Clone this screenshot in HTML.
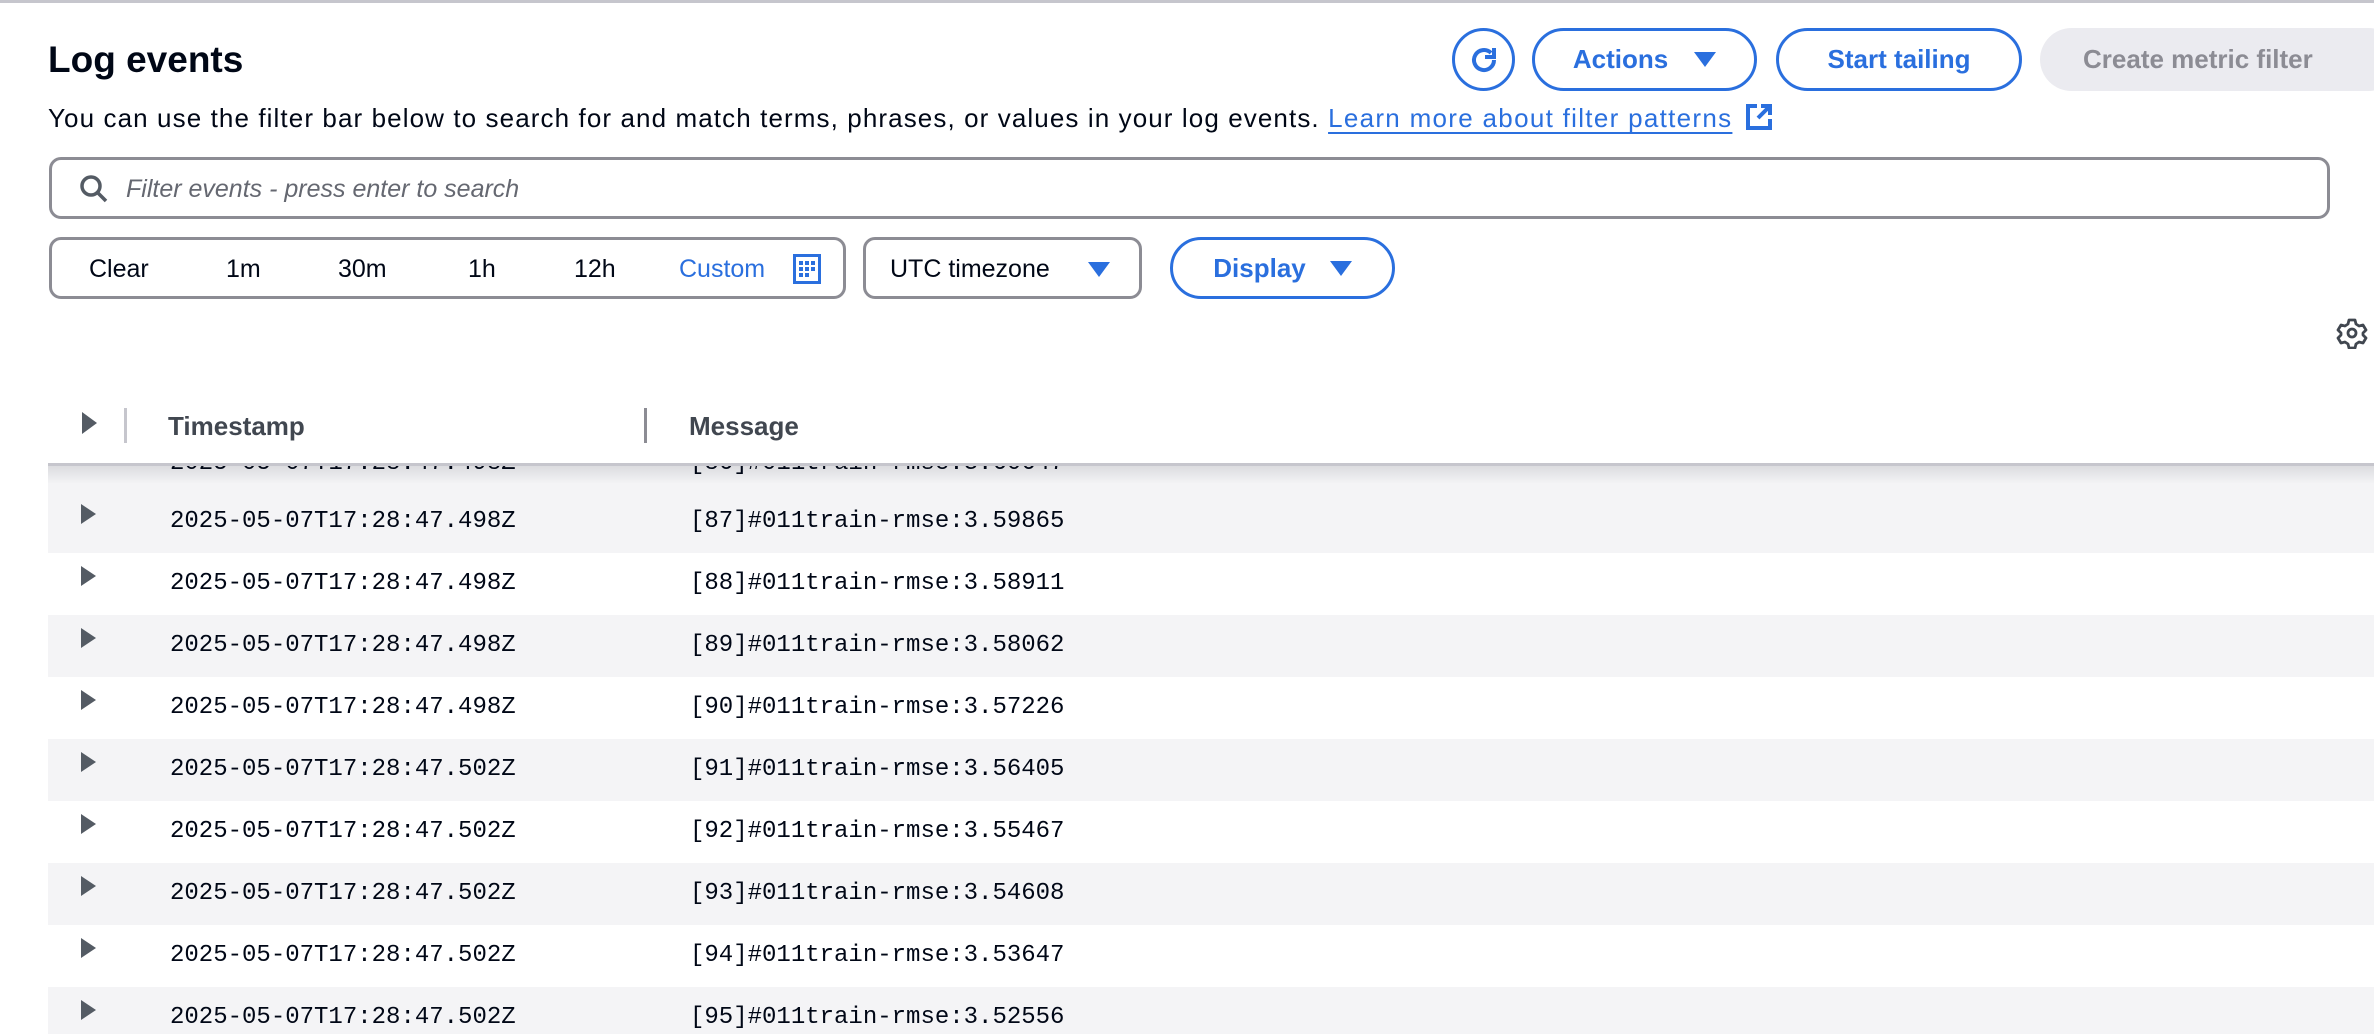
<!DOCTYPE html>
<html><head><meta charset="utf-8"><style>
*{box-sizing:border-box;margin:0;padding:0}
body{width:2374px;height:1034px;overflow:hidden;background:#fff;font-family:"Liberation Sans",sans-serif;color:#000716;position:relative}
.abs{position:absolute}
.topline{left:0;top:0;width:2374px;height:5px;border-top:3px solid #c6c6cd}
h1{position:absolute;left:48px;top:39px;font-size:37px;font-weight:bold;letter-spacing:0px}
.desc{left:48px;top:103px;font-size:26px;white-space:nowrap;letter-spacing:1.1px}
.desc a{color:#2a6fde;text-decoration:underline;text-underline-offset:5px;letter-spacing:1.3px}
.btn{position:absolute;border:3px solid #2a6fde;border-radius:32px;color:#2a6fde;font-weight:bold;font-size:26px;display:flex;align-items:center;justify-content:center;background:#fff}
.tri{display:inline-block;width:0;height:0;border-left:11px solid transparent;border-right:11px solid transparent;border-top:15px solid #2a6fde}
.box{position:absolute;border:3px solid #8c8c94;border-radius:12px}
.mono{font-family:"Liberation Mono",monospace;font-size:24px}
.row{position:absolute;left:48px;width:2326px;height:62px}
.row .c{position:absolute;left:33px;top:13px;width:0;height:0;border-top:10px solid transparent;border-bottom:10px solid transparent;border-left:15px solid #545b64}
.row .t{position:absolute;left:122px;top:17px}
.row .m{position:absolute;left:642px;top:17px}
.g{background:#f4f4f6}
</style></head><body>
<div class="abs topline"></div>
<h1>Log events</h1>
<div class="abs desc">You can use the filter bar below to search for and match terms, phrases, or values in your log events. <a>Learn more about filter patterns</a>
<svg width="28" height="28" viewBox="0 0 28 28" style="vertical-align:-4px;margin-left:4px"><path d="M12 3H3v22h22v-9" fill="none" stroke="#2a6fde" stroke-width="4"/><path d="M16 3h9v9M25 3L13 15" fill="none" stroke="#2a6fde" stroke-width="4"/></svg></div>

<div class="btn" style="left:1452px;top:28px;width:63px;height:63px;border-radius:50%">
<svg width="34" height="34" viewBox="0 0 34 34"><path d="M27 17a10 10 0 1 1-3-7.1" fill="none" stroke="#2a6fde" stroke-width="4"/><path d="M27 5v9h-9" fill="none" stroke="#2a6fde" stroke-width="4"/></svg></div>
<div class="btn" style="left:1532px;top:28px;width:225px;height:63px">Actions<span class="tri" style="margin-left:26px"></span></div>
<div class="btn" style="left:1776px;top:28px;width:246px;height:63px">Start tailing</div>
<div class="btn" style="left:2040px;top:28px;width:360px;height:63px;border:none;background:#ebebf0;color:#8c8c94;justify-content:flex-start;padding-left:43px">Create metric filter</div>

<div class="box" style="left:49px;top:157px;width:2281px;height:62px">
<svg class="abs" style="left:27px;top:14px" width="30" height="30" viewBox="0 0 30 30"><circle cx="12" cy="12" r="9" fill="none" stroke="#545b64" stroke-width="3.5"/><path d="M19 19l8 8" stroke="#545b64" stroke-width="3.5"/></svg>
<div class="abs" style="left:74px;top:15px;font-size:25px;font-style:italic;color:#656871">Filter events - press enter to search</div></div>

<div class="box" style="left:49px;top:237px;width:797px;height:62px;font-size:25px">
<span class="abs" style="left:37px;top:15px">Clear</span>
<span class="abs" style="left:174px;top:15px">1m</span>
<span class="abs" style="left:286px;top:15px">30m</span>
<span class="abs" style="left:416px;top:15px">1h</span>
<span class="abs" style="left:522px;top:15px">12h</span>
<span class="abs" style="left:627px;top:15px;color:#2a6fde">Custom</span>
<svg class="abs" style="left:741px;top:14px" width="28" height="30" viewBox="0 0 28 30"><rect x="1.5" y="1.5" width="25" height="27" fill="none" stroke="#2a6fde" stroke-width="3"/><g fill="#2a6fde"><rect x="6" y="7" width="4" height="4"/><rect x="12" y="7" width="4" height="4"/><rect x="18" y="7" width="4" height="4"/><rect x="6" y="13" width="4" height="4"/><rect x="12" y="13" width="4" height="4"/><rect x="18" y="13" width="4" height="4"/><rect x="6" y="19" width="4" height="4"/><rect x="12" y="19" width="4" height="4"/></g></svg>
</div>
<div class="box" style="left:863px;top:237px;width:279px;height:62px;font-size:25px">
<span class="abs" style="left:24px;top:15px">UTC timezone</span><span class="tri abs" style="left:222px;top:22px"></span></div>
<div class="btn" style="left:1170px;top:237px;width:225px;height:62px">Display<span class="tri" style="margin-left:24px"></span></div>

<svg class="abs" style="left:2336px;top:317px" width="32" height="32" viewBox="0 0 32 32"><path d="M13 3h6l1 4 3 2 4-1 3 5-3 3v2l3 3-3 5-4-1-3 2-1 4h-6l-1-4-3-2-4 1-3-5 3-3v-2l-3-3 3-5 4 1 3-2z" fill="none" stroke="#414750" stroke-width="2.8" stroke-linejoin="round"/><circle cx="16" cy="16" r="4" fill="none" stroke="#414750" stroke-width="2.8"/></svg>

<div class="abs" style="left:48px;top:463px;width:2326px;height:571px;overflow:hidden">
<div class="mono" style="position:absolute;left:0;top:0;width:100%">
<div class="row g" style="top:-30px;left:0"><span class="t">2025-05-07T17:28:47.498Z</span><span class="m">[86]#011train-rmse:3.60647</span></div>
<div class="row g" style="top:28px;left:0"><div class="c"></div><span class="t">2025-05-07T17:28:47.498Z</span><span class="m">[87]#011train-rmse:3.59865</span></div>
<div class="row" style="top:90px;left:0"><div class="c"></div><span class="t">2025-05-07T17:28:47.498Z</span><span class="m">[88]#011train-rmse:3.58911</span></div>
<div class="row g" style="top:152px;left:0"><div class="c"></div><span class="t">2025-05-07T17:28:47.498Z</span><span class="m">[89]#011train-rmse:3.58062</span></div>
<div class="row" style="top:214px;left:0"><div class="c"></div><span class="t">2025-05-07T17:28:47.498Z</span><span class="m">[90]#011train-rmse:3.57226</span></div>
<div class="row g" style="top:276px;left:0"><div class="c"></div><span class="t">2025-05-07T17:28:47.502Z</span><span class="m">[91]#011train-rmse:3.56405</span></div>
<div class="row" style="top:338px;left:0"><div class="c"></div><span class="t">2025-05-07T17:28:47.502Z</span><span class="m">[92]#011train-rmse:3.55467</span></div>
<div class="row g" style="top:400px;left:0"><div class="c"></div><span class="t">2025-05-07T17:28:47.502Z</span><span class="m">[93]#011train-rmse:3.54608</span></div>
<div class="row" style="top:462px;left:0"><div class="c"></div><span class="t">2025-05-07T17:28:47.502Z</span><span class="m">[94]#011train-rmse:3.53647</span></div>
<div class="row g" style="top:524px;left:0"><div class="c"></div><span class="t">2025-05-07T17:28:47.502Z</span><span class="m">[95]#011train-rmse:3.52556</span></div>
</div>
<div class="abs" style="left:0;top:0;width:100%;height:3px;background:#c6c6cd"></div>
<div class="abs" style="left:0;top:3px;width:100%;height:18px;background:linear-gradient(rgba(0,7,22,0.10),rgba(0,7,22,0))"></div>
</div>

<div class="abs" style="left:82px;top:412px;width:0;height:0;border-top:11px solid transparent;border-bottom:11px solid transparent;border-left:15px solid #545b64"></div>
<div class="abs" style="left:124px;top:408px;width:3px;height:35px;background:#c6c6cd"></div>
<div class="abs" style="left:644px;top:408px;width:3px;height:35px;background:#8c8c94"></div>
<div class="abs" style="left:168px;top:411px;font-size:26px;font-weight:bold;color:#414750">Timestamp</div>
<div class="abs" style="left:689px;top:411px;font-size:26px;font-weight:bold;color:#414750">Message</div>
</body></html>
